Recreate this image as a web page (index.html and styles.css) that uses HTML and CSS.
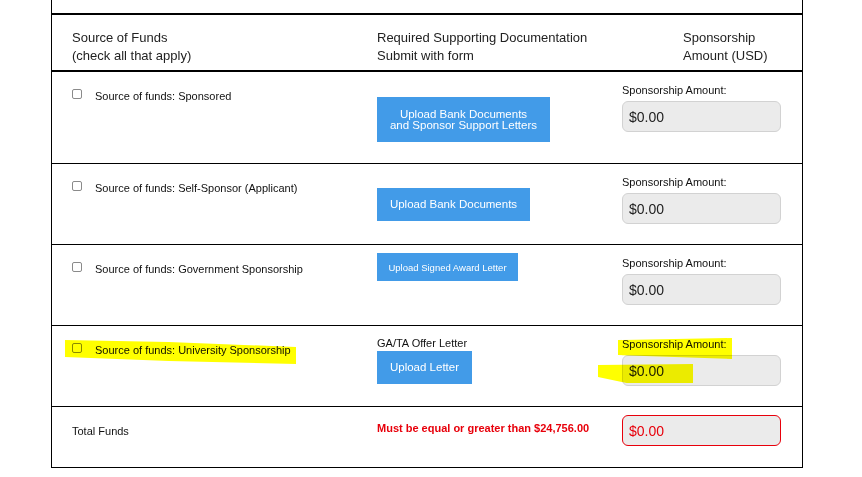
FILE: index.html
```html
<!DOCTYPE html>
<html lang="en">
<head>
<meta charset="utf-8">
<title>Source of Funds</title>
<link rel="stylesheet" href="styles.css">
</head>
<body>
<div class="sheet">
  <div class="spacer"></div>

  <div class="row row-head">
    <div class="cell c1">Source of Funds<br>(check all that apply)</div>
    <div class="cell c2">Required Supporting Documentation<br>Submit with form</div>
    <div class="cell c3 head-amt">Sponsorship<br>Amount (USD)</div>
  </div>

  <div class="row row-tall">
    <div class="cell c1"><label class="src"><input type="checkbox" class="cb"><span>Source of funds: Sponsored</span></label></div>
    <div class="cell c2 pad-25"><button class="btn btn-two">Upload Bank Documents<br>and Sponsor Support Letters</button></div>
    <div class="cell c3"><div class="amt-label">Sponsorship Amount:</div><input class="amt" type="text" value="$0.00" readonly></div>
  </div>

  <div class="row">
    <div class="cell c1"><label class="src"><input type="checkbox" class="cb"><span>Source of funds: Self-Sponsor (Applicant)</span></label></div>
    <div class="cell c2 pad-24"><button class="btn btn-bank">Upload Bank Documents</button></div>
    <div class="cell c3"><div class="amt-label">Sponsorship Amount:</div><input class="amt" type="text" value="$0.00" readonly></div>
  </div>

  <div class="row">
    <div class="cell c1"><label class="src"><input type="checkbox" class="cb"><span>Source of funds: Government Sponsorship</span></label></div>
    <div class="cell c2 pad-8"><button class="btn btn-award">Upload Signed Award Letter</button></div>
    <div class="cell c3"><div class="amt-label">Sponsorship Amount:</div><input class="amt" type="text" value="$0.00" readonly></div>
  </div>

  <div class="row row-marked">
    <div class="cell c1"><label class="src"><input type="checkbox" class="cb"><span>Source of funds: University Sponsorship</span></label></div>
    <div class="cell c2 pad-10"><div class="doc-title">GA/TA Offer Letter</div><button class="btn btn-letter">Upload Letter</button></div>
    <div class="cell c3"><div class="amt-label">Sponsorship Amount:</div><input class="amt" type="text" value="$0.00" readonly></div>
    <span class="hl hl-src"></span>
    <span class="hl hl-label"></span>
    <span class="hl hl-value"></span>
  </div>

  <div class="row row-total">
    <div class="cell c1 total-label">Total Funds</div>
    <div class="cell c2 total-warn">Must be equal or greater than $24,756.00</div>
    <div class="cell c3 total-amt"><input class="amt amt-error" type="text" value="$0.00" readonly></div>
  </div>
</div>
</body>
</html>
```

FILE: styles.css
```css
* { box-sizing: border-box; }

html, body {
  margin: 0;
  padding: 0;
  background: #fff;
}

body {
  font-family: "Liberation Sans", Arial, sans-serif;
  color: #222;
}

.sheet {
  margin-left: 51px;
  width: 752px;
  border-left: 1px solid #000;
  border-right: 1px solid #000;
  border-bottom: 1px solid #000;
}

.spacer {
  height: 15px;
  border-bottom: 2px solid #000;
}

.row {
  display: grid;
  grid-template-columns: 325px 245px 180px;
  height: 81px;
  border-bottom: 1px solid #000;
}

.row-head {
  height: 57px;
  border-bottom: 2px solid #000;
  font-size: 13px;
  line-height: 18px;
}

.row-head .cell { padding-top: 14px; }
.row-head .head-amt { padding-left: 61px; }

.row-tall { height: 92px; }

.row-total {
  height: 60px;
  border-bottom: none;
}

.cell { min-width: 0; }

.c1 { padding: 17px 0 0 20px; }

.src {
  display: flex;
  align-items: flex-start;
  font-size: 11px;
  line-height: 14px;
  color: #111;
}

.cb {
  appearance: none;
  -webkit-appearance: none;
  width: 10px;
  height: 10px;
  margin: 0 13px 0 0;
  border: 1px solid #8a8a8a;
  border-radius: 2px;
  background: #fff;
  flex: none;
}

.c2 { display: flex; flex-direction: column; align-items: flex-start; }
.pad-25 { padding-top: 25px; }
.pad-24 { padding-top: 24px; }
.pad-8 { padding-top: 8px; }
.pad-10 { padding-top: 10px; }

.row-head .c2 { display: block; }

.doc-title {
  font-size: 11px;
  line-height: 14px;
  color: #111;
  margin-bottom: 1px;
}

.btn {
  border: none;
  border-radius: 0;
  background: #429be8;
  color: #fff;
  font-family: "Liberation Sans", Arial, sans-serif;
  font-size: 11.5px;
  line-height: 11px;
  padding: 0;
  text-align: center;
}

.btn-two { width: 173px; height: 45px; }
.btn-bank { width: 153px; height: 33px; }
.btn-award { width: 141px; height: 28px; font-size: 9.5px; }
.btn-letter { width: 95px; height: 33px; }

.c3 { padding-top: 11px; }

.amt-label {
  font-size: 11px;
  line-height: 14px;
  color: #111;
  margin-bottom: 4px;
}

.amt {
  display: block;
  width: 159px;
  height: 31px;
  padding: 0 6px;
  border: 1px solid #d2d2d2;
  border-radius: 6px;
  background: #ebebeb;
  font-family: "Liberation Sans", Arial, sans-serif;
  font-size: 14px;
  color: #222;
  outline: none;
}

.amt-error {
  border-color: #e8000b;
  color: #e8000b;
}

.total-label {
  padding-top: 17px;
  font-size: 11px;
  line-height: 14px;
  color: #111;
}

.total-warn {
  display: block;
  padding-top: 14px;
  font-size: 11px;
  line-height: 14px;
  font-weight: bold;
  color: #e8000b;
}

.total-amt { padding-top: 8px; }

/* highlighter marks drawn over row 4 */
.row-marked { position: relative; }

.hl {
  position: absolute;
  background: #ffff00;
  mix-blend-mode: multiply;
  pointer-events: none;
}

.hl-src {
  left: 13px;
  top: 14px;
  width: 231px;
  height: 24px;
  clip-path: polygon(0 0, 45% 2px, 100% 7px, 100% 100%, 45% 21px, 0 17px);
}

.hl-label {
  left: 566px;
  top: 12px;
  width: 114px;
  height: 21px;
  clip-path: polygon(0 2px, 100% 0, 100% 100%, 0 17px);
}

.hl-value {
  left: 546px;
  top: 38px;
  width: 95px;
  height: 19px;
  clip-path: polygon(0 1px, 100% 0, 100% 100%, 30% 100%, 0 13px);
}
```
